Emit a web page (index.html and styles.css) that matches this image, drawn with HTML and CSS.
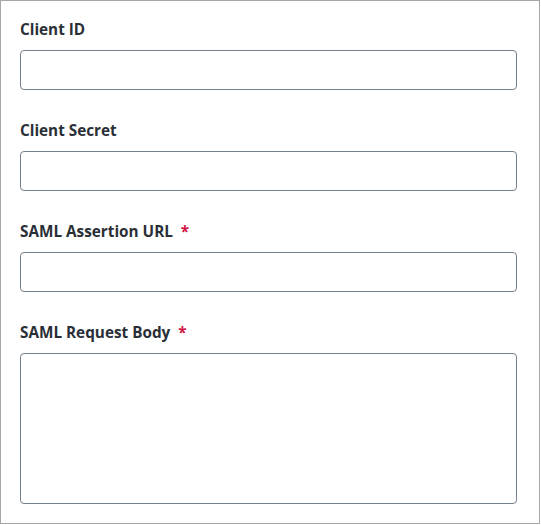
FILE: index.html
```html
<!DOCTYPE html>
<html lang="en">
<head>
  <meta charset="UTF-8">
  <title>SAML Settings</title>
  <link rel="stylesheet" href="styles.css">
</head>
<body>

<div class="panel">
  <div class="field">
    <label for="clientId">Client ID</label>
    <input type="text" id="clientId">
  </div>

  <div class="field">
    <label for="clientSecret">Client Secret</label>
    <input type="text" id="clientSecret">
  </div>

  <div class="field">
    <label for="assertionUrl">SAML Assertion URL <span class="required">*</span></label>
    <input type="text" id="assertionUrl">
  </div>

  <div class="field">
    <label for="requestBody">SAML Request Body <span class="required">*</span></label>
    <textarea id="requestBody"></textarea>
  </div>
</div>

</body>
</html>
```

FILE: styles.css
```css
body {
  font-family: "Open Sans", Lato, sans-serif;
  margin: 0;
  background: #fff;
}
.panel {
  width: 540px;
  height: 524px;
  box-sizing: border-box;
  border: 1px solid #a6a6a6;
  padding: 18px 22px 19px 19px;
}
.field {
  margin-bottom: 30px;
}
.field label {
  display: block;
  font-size: 15.3px;
  line-height: 20px;
  font-weight: 700;
  color: #2a2f37;
  margin-bottom: 11px;
}
.required {
  color: #d11242;
  margin-left: 4px;
}
.field input,
.field textarea {
  display: block;
  width: 100%;
  box-sizing: border-box;
  border: 1px solid #76818d;
  border-radius: 4px;
  padding: 8px;
  font-family: inherit;
  font-size: 14px;
  resize: none;
}
.field input {
  height: 40px;
}
.field textarea {
  height: 151px;
}
```
